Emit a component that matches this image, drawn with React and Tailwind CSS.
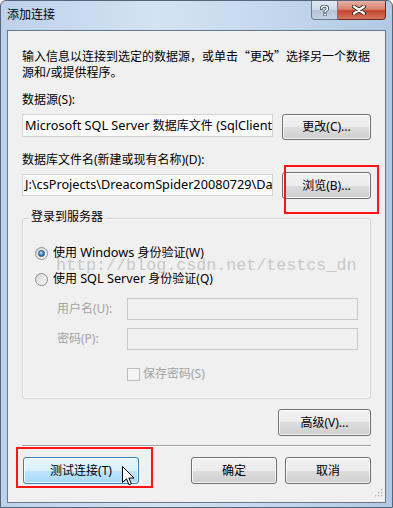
import React from 'react';

const FONT = "font-['Noto_Sans','Noto_Sans_CJK_SC',sans-serif]";

// GDI renders the Latin runs a little wider than Noto Sans does at 12px
const Lat = ({ children }) => <span className="text-[12.7px] leading-[0]">{children}</span>;

const Btn = ({ children, className = '', hot = false }) => (
  <div
    className={`flex items-center justify-center rounded-[3px] border text-[12px] leading-[16px] text-black shadow-[inset_0_0_0_1px_rgba(255,255,255,0.75)] ${
      hot
        ? 'border-[#3c7fb1] bg-[linear-gradient(#eaf6fd_0%,#d9f0fc_50%,#bee6fd_50%,#a7d9f5_100%)]'
        : 'border-[#707070] bg-[linear-gradient(#f2f2f2_0%,#ebebeb_50%,#dddddd_50%,#cfcfcf_100%)]'
    } ${className}`}
  >
    {children}
  </div>
);

const Radio = ({ checked }) => (
  <div className="flex h-[13px] w-[13px] items-center justify-center rounded-full border border-[#8e8f8f] bg-[linear-gradient(135deg,#d6d6d6,#f8f8f8)]">
    {checked && (
      <div className="h-[7px] w-[7px] rounded-full border border-[#1c4f80] bg-[radial-gradient(circle_at_40%_35%,#b4defa,#3a85c4_55%,#1d5a92)]" />
    )}
  </div>
);

export default function App() {
  return (
    <div
      className={`relative h-[508px] w-[393px] overflow-hidden rounded-t-[6px] border border-[#55667a] bg-[linear-gradient(90deg,#bcd1ea_0%,#d4e3f3_40%,#c9dbef_60%,#b1c9e5_100%)] ${FONT}`}
    >
      {/* title bar */}
      <div className="flex h-[29px] items-start">
        <div className="pl-[6px] pt-[6px] text-[12px] leading-[16px] text-black">添加连接</div>
        <div className="ml-auto mr-[6px] flex">
          <div className="flex h-[19px] w-[27px] items-center justify-center rounded-bl-[4px] border border-t-0 border-[#6a7b8e] bg-[linear-gradient(#e2eaf3_0%,#cbd8e6_50%,#b3c4d6_50%,#c4d3e3_100%)]">
            <svg width="9" height="11" viewBox="0 0 9 11">
              <path d="M1.5 3.5 C1.5 0.5 7.5 0.5 7.5 3.5 C7.5 5.5 5 5.5 5 7" fill="none" stroke="#3a4656" strokeWidth="3.2" strokeLinecap="round" />
              <path d="M1.5 3.5 C1.5 0.5 7.5 0.5 7.5 3.5 C7.5 5.5 5 5.5 5 7" fill="none" stroke="#fff" strokeWidth="1.6" strokeLinecap="round" />
              <circle cx="5" cy="9.6" r="1.5" fill="#fff" stroke="#3a4656" strokeWidth="0.8" />
            </svg>
          </div>
          <div className="flex h-[19px] w-[48px] items-center justify-center rounded-br-[4px] border border-l-0 border-t-0 border-[#6b2a20] bg-[linear-gradient(#eab1a5_0%,#d9826f_45%,#c4452c_55%,#d5765d_100%)] pr-[5px]">
            <svg width="14" height="10" viewBox="0 0 14 10">
              <path d="M2 1.5 L12 8.5 M12 1.5 L2 8.5" stroke="#3a2a28" strokeWidth="4.2" strokeLinecap="round" />
              <path d="M2 1.5 L12 8.5 M12 1.5 L2 8.5" stroke="#fff" strokeWidth="2.2" strokeLinecap="round" />
            </svg>
          </div>
        </div>
      </div>

      {/* client area */}
      <div className="relative mx-[6px] flex h-[473px] flex-col border border-[#6a7889] bg-[#f0f0f0] px-[14px] pt-[17px] text-[12px] leading-[16px] text-black">
        <div className="whitespace-nowrap">
          输入信息以连接到选定的数据源，或单击<span className="font-['Noto_Sans_CJK_SC',sans-serif]">“</span>更改
          <span className="font-['Noto_Sans_CJK_SC',sans-serif]">”</span>选择另一个数据
          <br />
          源和/或提供程序。
        </div>

        <div className="mt-[11px]">数据源(S):</div>
        <div className="mt-[6px] flex h-[26px] items-start">
          <div className="h-[23px] w-[251px] overflow-hidden whitespace-nowrap border border-[#d3d3d3] bg-[#fafafa] pl-[2px] leading-[21px]">
            <Lat>Microsoft SQL Server </Lat>数据库文件<Lat> (SqlClient)</Lat>
          </div>
          <Btn className="ml-auto h-[26px] w-[89px]">更改(C)...</Btn>
        </div>

        <div className="mt-[12px]">数据库文件名(新建或现有名称)(D):</div>
        <div className="mt-[4px] flex h-[27px] items-start">
          <div className="mt-[2px] h-[22px] w-[251px] overflow-hidden whitespace-nowrap border border-[#d3d3d3] bg-[#fafafa] pl-[2px] leading-[20px]">
            <Lat>J:\csProjects\DreacomSpider20080729\DataBase\</Lat>
          </div>
          <Btn className="ml-auto h-[27px] w-[89px]">浏览(B)...</Btn>
        </div>

        {/* group box */}
        <div className="relative mt-[19px] flex h-[181px] flex-col rounded-[3px] border border-[#d5d5d5] shadow-[inset_0_0_0_1px_#fafafa]">
          <div className="absolute -top-[10px] left-[6px] bg-[#f0f0f0] px-[2px]">登录到服务器</div>

          <div className="mt-[26px] flex h-[16px] items-center pl-[12px]">
            <Radio checked />
            <span className="ml-[5px]">使用 <Lat>Windows</Lat> 身份验证(W)</span>
          </div>
          <div className="mt-[10px] flex h-[16px] items-center pl-[12px]">
            <Radio />
            <span className="ml-[5px]">使用 <Lat>SQL Server</Lat> 身份验证(Q)</span>
          </div>

          <div className="mt-[11px] flex h-[22px] items-center pl-[34px] text-[#a3a3a3]">
            <span className="w-[70px]">用户名(U):</span>
            <div className="h-[22px] w-[231px] border border-[#c9c9c9] bg-[#f0f0f0]" />
          </div>
          <div className="mt-[8px] flex h-[22px] items-center pl-[34px] text-[#a3a3a3]">
            <span className="w-[70px]">密码(P):</span>
            <div className="h-[22px] w-[231px] border border-[#c9c9c9] bg-[#f0f0f0]" />
          </div>

          <div className="mt-[16px] flex h-[16px] items-center pl-[104px] text-[#a3a3a3]">
            <div className="h-[13px] w-[13px] border border-[#bcbcbc] bg-[#f4f4f4]" />
            <span className="ml-[3px]">保存密码(S)</span>
          </div>
        </div>

        <Btn className="mt-[10px] h-[27px] w-[93px] self-end">高级(V)...</Btn>

        <div className="mt-[9px] h-[2px] border-b border-t border-b-white border-t-[#a0a0a0]" />

        <div className="mt-[10px] flex h-[27px]">
          <Btn hot className="ml-[1px] h-[27px] w-[116px]">测试连接(T)</Btn>
          <Btn className="ml-auto h-[27px] w-[86px]">确定</Btn>
          <Btn className="ml-[8px] h-[27px] w-[86px]">取消</Btn>
        </div>

        {/* resize grip */}
        <svg className="absolute bottom-[5px] right-[2px]" width="9" height="9" viewBox="0 0 9 9">
          {[
            [7, 1], [4, 4], [7, 4], [1, 7], [4, 7], [7, 7],
          ].map(([x, y]) => (
            <g key={`${x}-${y}`}>
              <rect x={x + 0.5} y={y + 0.5} width="1.5" height="1.5" fill="#fff" />
              <rect x={x} y={y} width="1.5" height="1.5" fill="#b8b8b8" />
            </g>
          ))}
        </svg>
      </div>

      {/* watermark */}
      <div className="pointer-events-none absolute left-[55px] top-[254px] whitespace-nowrap font-['Liberation_Mono',monospace] text-[16.7px] leading-[22px] text-[#c8c8c8]">
        http://blog.csdn.net/testcs_dn
      </div>

      {/* annotation boxes */}
      <div className="absolute left-[283px] top-[164px] h-[49px] w-[95px] border-2 border-[#ff1414]" />
      <div className="absolute left-[15px] top-[446px] h-[41px] w-[137px] border-2 border-[#ff1414]" />

      {/* mouse cursor */}
      <svg className="absolute left-[121px] top-[465px]" width="13" height="20" viewBox="0 0 13 20">
        <path d="M0.5 0.5 L0.5 16.5 L4.5 12.8 L7 18.8 L9.3 17.8 L6.9 12 L12 12 Z" fill="#fff" stroke="#000" strokeWidth="1" strokeLinejoin="miter" />
      </svg>
    </div>
  );
}
